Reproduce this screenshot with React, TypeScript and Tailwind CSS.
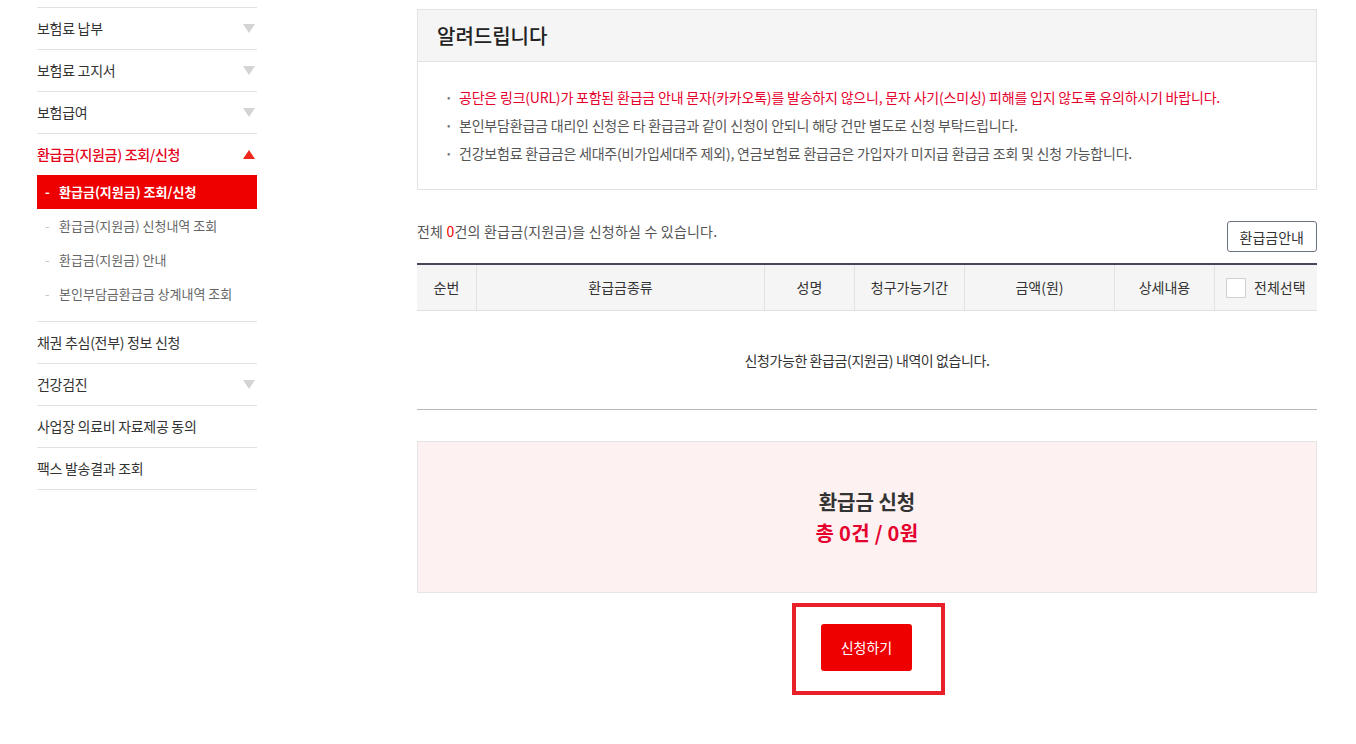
const FONT = '"Noto Sans CJK KR", "Noto Sans", sans-serif';

interface MenuItem {
  label: string;
  arrow?: boolean;
}

// =====================================================
// SIDEBAR MENU
// =====================================================
const topItems: MenuItem[] = [
  { label: "보험료 납부", arrow: true },
  { label: "보험료 고지서", arrow: true },
  { label: "보험급여", arrow: true },
];

const subItems = [
  { label: "환급금(지원금) 조회/신청", active: true },
  { label: "환급금(지원금) 신청내역 조회" },
  { label: "환급금(지원금) 안내" },
  { label: "본인부담금환급금 상계내역 조회" },
];

const bottomItems: MenuItem[] = [
  { label: "채권 추심(전부) 정보 신청" },
  { label: "건강검진", arrow: true },
  { label: "사업장 의료비 자료제공 동의" },
  { label: "팩스 발송결과 조회" },
];

const notices = [
  { text: "공단은 링크(URL)가 포함된 환급금 안내 문자(카카오톡)를 발송하지 않으니, 문자 사기(스미싱) 피해를 입지 않도록 유의하시기 바랍니다.", red: true },
  { text: "본인부담환급금 대리인 신청은 타 환급금과 같이 신청이 안되니 해당 건만 별도로 신청 부탁드립니다." },
  { text: "건강보험료 환급금은 세대주(비가입세대주 제외), 연금보험료 환급금은 가입자가 미지급 환급금 조회 및 신청 가능합니다." },
];

function DownArrow() {
  return (
    <svg width="12" height="9" viewBox="0 0 12 9" className="mr-[2px]">
      <path d="M0 0 L12 0 L6 9 Z" fill="#d4d4d4" />
    </svg>
  );
}

function UpArrow() {
  return (
    <svg width="12" height="9" viewBox="0 0 12 9" className="mr-[2px]">
      <path d="M0 9 L12 9 L6 0 Z" fill="#f0271d" />
    </svg>
  );
}

function MenuRow({ item }: { item: MenuItem }) {
  return (
    <li className="h-[42px] flex items-center justify-between border-b border-[#e2e2e2] text-[14px] tracking-[-0.3px] text-[#333]">
      <span>{item.label}</span>
      {item.arrow && <DownArrow />}
    </li>
  );
}

function Sidebar() {
  return (
    <aside className="w-[220px] flex-shrink-0 ml-[37px] mt-[7px]">
      <ul className="border-t border-[#e2e2e2]">
        {topItems.map((it) => (
          <MenuRow key={it.label} item={it} />
        ))}
        <li className="border-b border-[#e2e2e2]">
          <div className="h-[41px] flex items-center justify-between text-[14px] tracking-[-0.3px] text-[#e5001a] font-medium">
            <span>환급금(지원금) 조회/신청</span>
            <UpArrow />
          </div>
          <ul className="pb-[10px]">
            {subItems.map((s) => (
              <li
                key={s.label}
                className={
                  s.active
                    ? "h-[34px] flex items-center bg-[#ee0000] text-white font-bold text-[13px]"
                    : "h-[34px] flex items-center text-[#666] text-[13px]"
                }
              >
                <span className={s.active ? "w-[22px] pl-[8px] text-white" : "w-[22px] pl-[8px] text-[#c4c4c4]"}>-</span>
                <span>{s.label}</span>
              </li>
            ))}
          </ul>
        </li>
        {bottomItems.map((it) => (
          <MenuRow key={it.label} item={it} />
        ))}
      </ul>
    </aside>
  );
}

// =====================================================
// MAIN CONTENT
// =====================================================
const columns = [
  { label: "순번", w: "w-[60px]" },
  { label: "환급금종류", w: "w-[288px]" },
  { label: "성명", w: "w-[90px]" },
  { label: "청구가능기간", w: "w-[110px]" },
  { label: "금액(원)", w: "w-[150px]" },
  { label: "상세내용", w: "w-[100px]" },
];

function Main() {
  return (
    <main className="w-[900px] ml-[160px] mt-[9px] pb-[40px]">
      {/* notice box */}
      <section className="border border-[#e2e2e2]">
        <div className="h-[52px] bg-[#f5f5f5] border-b border-[#e2e2e2] flex items-center px-[19px]">
          <h2 className="text-[20px] font-medium text-[#222] leading-none">알려드립니다</h2>
        </div>
        <ul className="pt-[21px] pb-[22px] pl-[29px]">
          {notices.map((n) => (
            <li key={n.text} className="flex items-center h-[28px] text-[14px] leading-[28px] tracking-[-0.2px]">
              <span className="w-[12px] text-[#777] text-[10px]">•</span>
              <span className={n.red ? "text-[#e5002d]" : "text-[#555]"}>{n.text}</span>
            </li>
          ))}
        </ul>
      </section>

      {/* count + guide button */}
      <div className="flex justify-between items-start mt-[31px]">
        <p className="text-[14px] leading-[20px] tracking-[0.2px] text-[#555]">
          전체 <span className="text-[#ee0000]">0</span>건의 환급금(지원금)을 신청하실 수 있습니다.
        </p>
        <button className="h-[31px] px-[12px] border border-[#6b7280] rounded-[3px] text-[14px] text-[#333] bg-white leading-none">
          환급금안내
        </button>
      </div>

      {/* table */}
      <div className="mt-[11px] border-t-2 border-[#44465a]">
        <div className="flex h-[46px] bg-[#f5f5f5] border-b border-[#e0e0e0] text-[14px] text-[#333]">
          {columns.map((c) => (
            <div key={c.label} className={`${c.w} flex items-center justify-center border-r border-[#e3e3e3]`}>
              {c.label}
            </div>
          ))}
          <div className="flex-1 flex items-center pl-[11px] gap-[8px]">
            <span className="w-[20px] h-[20px] border border-[#d0d0d0] bg-white" />
            <span>전체선택</span>
          </div>
        </div>
        <div className="h-[99px] flex items-center justify-center text-[14px] tracking-[-0.4px] text-[#333] border-b border-[#b8b8b8]">
          신청가능한 환급금(지원금) 내역이 없습니다.
        </div>
      </div>

      {/* summary */}
      <div className="mt-[31px] h-[152px] bg-[#fdf1f1] border border-[#e5e5e5] flex flex-col items-center justify-center">
        <p className="text-[20px] font-bold text-[#333] leading-[31px]">환급금 신청</p>
        <p className="text-[20px] font-bold text-[#e5002d] leading-[31px] tracking-[0.3px]">총 0건 / 0원</p>
      </div>

      {/* submit */}
      <div className="flex justify-center mt-[10px]">
        <div className="ml-[3px] border-4 border-[#e8202a] pt-[17px] pb-[20px] pl-[25px] pr-[29px]">
          <button className="w-[91px] h-[47px] bg-[#ee0000] rounded-[3px] text-white text-[14px]">신청하기</button>
        </div>
      </div>
    </main>
  );
}

export default function App() {
  return (
    <div className="w-[1356px] min-h-[744px] bg-white flex items-start" style={{ fontFamily: FONT }}>
      <Sidebar />
      <Main />
    </div>
  );
}
